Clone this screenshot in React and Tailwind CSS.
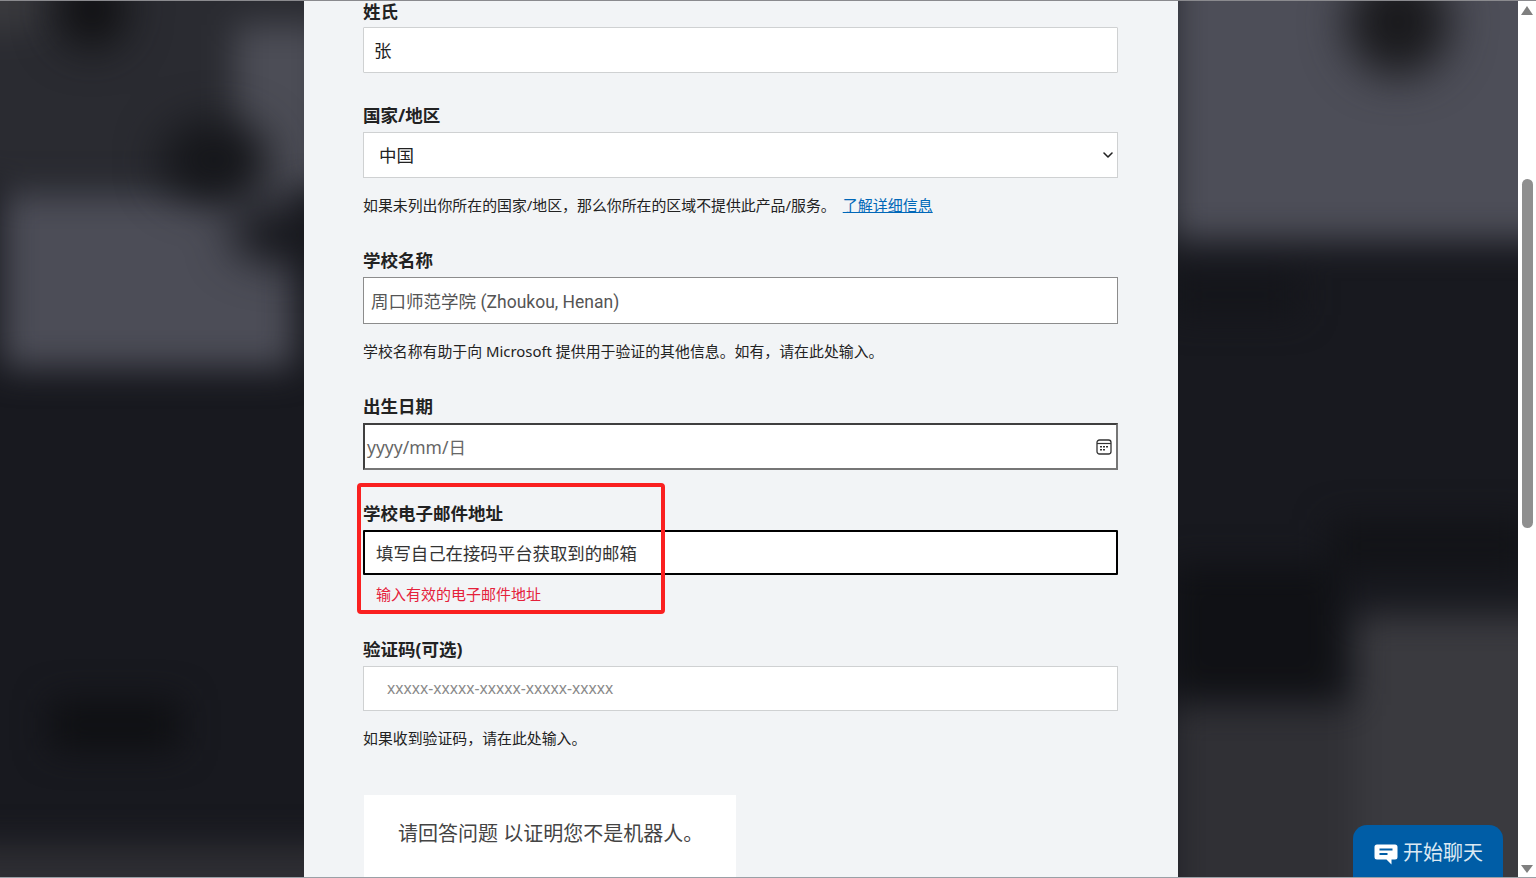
import { ChevronDown } from "lucide-react";

const Label = ({ className = "", children }) => (
    <div className={`h-6 text-[17.5px] font-bold text-[#222] ${className}`}>{children}</div>
);

const Help = ({ className = "", children }) => (
    <p className={`h-6 text-[14.9px] leading-[23px] text-[#222] whitespace-nowrap ${className}`}>{children}</p>
);

// blurred photo behind the form
function Backdrop() {
    return (
        <svg className="absolute inset-0 h-full w-full" viewBox="0 0 1518 878" preserveAspectRatio="none">
            <defs>
                <filter id="soft" x="-20%" y="-20%" width="140%" height="140%" colorInterpolationFilters="sRGB">
                    <feGaussianBlur stdDeviation="17" />
                </filter>
                <filter id="softer" x="-60%" y="-60%" width="220%" height="220%" colorInterpolationFilters="sRGB">
                    <feGaussianBlur stdDeviation="22" />
                </filter>
            </defs>
            <rect width="1518" height="878" fill="#18191f" />
            <g filter="url(#soft)">
                <rect x="-40" y="-40" width="380" height="225" fill="#2a2b31" />
                <rect x="-40" y="-40" width="80" height="70" fill="#3a3a3e" />
                <rect x="2" y="192" width="292" height="176" fill="#4c4d57" />
                <rect x="235" y="25" width="90" height="165" fill="#4c4d56" />
                <rect x="-40" y="845" width="380" height="80" fill="#2e2e33" />
                <rect x="50" y="700" width="130" height="50" fill="#0f1013" />
                <rect x="1170" y="-40" width="400" height="280" fill="#4d4e58" />
                <rect x="1170" y="705" width="400" height="220" fill="#303035" />
                <rect x="1355" y="615" width="200" height="300" fill="#3a3a3f" />
                <rect x="1170" y="275" width="130" height="40" fill="#14151a" />
                <rect x="1170" y="565" width="170" height="130" fill="#101115" />
                <rect x="1330" y="520" width="200" height="50" fill="#121317" />
            </g>
            <g filter="url(#softer)">
                <ellipse cx="92" cy="10" rx="34" ry="38" fill="#0f0f11" />
                <ellipse cx="1398" cy="22" rx="52" ry="54" fill="#1a1a1d" />
                <ellipse cx="215" cy="160" rx="55" ry="40" fill="#15161a" />
                <ellipse cx="285" cy="235" rx="55" ry="28" fill="#14151a" />
            </g>
        </svg>
    );
}

function CalendarIcon() {
    return (
        <svg width="16" height="16" viewBox="0 0 16 16" fill="none" className="shrink-0">
            <rect x="1" y="1" width="14" height="14" rx="2.5" stroke="#333" strokeWidth="1.3" />
            <path d="M1 4.5h14" stroke="#333" strokeWidth="1.2" />
            <path d="M4 7h2v1.6H4zM7 7h2v1.6H7zM10 7h2v1.6h-2zM4 10h2v1.6H4zM7 10h2v1.6H7z" fill="#333" />
        </svg>
    );
}

function ChatIcon() {
    return (
        <svg width="24" height="21" viewBox="0 0 24 21" className="shrink-0">
            <path d="M3 0.5h18a2.5 2.5 0 0 1 2.5 2.5v10a2.5 2.5 0 0 1-2.5 2.5h-3.5v5l-5-5H3A2.5 2.5 0 0 1 .5 13V3A2.5 2.5 0 0 1 3 .5z" fill="#fff" />
            <path d="M5.5 5.5h13M5.5 10h8" stroke="#005da6" strokeWidth="2" />
        </svg>
    );
}

function Scrollbar() {
    return (
        <div className="flex h-full w-[18px] shrink-0 flex-col items-center bg-white">
            <svg width="12" height="9" viewBox="0 0 12 9" className="mt-[6px] shrink-0">
                <path d="M6 0l6 9H0z" fill="#7f7f7f" />
            </svg>
            <div className="mt-[164px] h-[349px] w-[11px] shrink-0 rounded-full bg-[#8f8f8f]"></div>
            <svg width="12" height="8" viewBox="0 0 12 8" className="mt-[337px] shrink-0">
                <path d="M0 0h12L6 8z" fill="#7f7f7f" />
            </svg>
        </div>
    );
}

export default function App() {
    return (
        <div
            className="relative flex h-screen overflow-hidden text-[#222]"
            style={{ fontFamily: '"Noto Sans", "Noto Sans CJK SC", sans-serif' }}
        >
            <div className="relative h-full flex-1 overflow-hidden pl-[304px]">
                <Backdrop />

                <main className="relative h-full w-[874px] bg-[#f2f4f6] px-[59px]">
                    <div className="w-[755px]">
                        <Label className="leading-[22px]">姓氏</Label>
                        <div className="mt-[3px] flex h-[46px] items-center rounded-[1px] border border-[#cfd1d2] bg-white pl-[10px] text-[17.5px]">
                            张
                        </div>

                        <Label className="mt-[31px] leading-[22px]">国家/地区</Label>
                        <div className="mt-[4px] flex h-[46px] items-center justify-between border border-[#cfd1d2] bg-white pl-[15px] pr-[1px] text-[17.5px]">
                            中国
                            <ChevronDown size={16} strokeWidth={2.4} className="text-[#222]" />
                        </div>
                        <Help className="mt-[16px]">
                            如果未列出你所在的国家/地区，那么你所在的区域不提供此产品/服务。
                            <a href="#" className="ml-[7px] text-[15px] text-[#0067b8] underline">了解详细信息</a>
                        </Help>

                        <Label className="mt-[31px] leading-[22px]">学校名称</Label>
                        <div className="mt-[4px] flex h-[47px] items-center border border-[#8c8c8c] bg-white pl-[7px] pt-[2px] text-[17.5px] text-[#555]">
                            <span className="whitespace-pre">周口师范学院 <span className="font-['Roboto']">(Zhoukou, Henan)</span></span>
                        </div>
                        <Help className="mt-[16px]">学校名称有助于向 Microsoft 提供用于验证的其他信息。如有，请在此处输入。</Help>

                        <Label className="mt-[31px] leading-[22px]">出生日期</Label>
                        <div className="mt-[4px] flex h-[47px] items-center justify-between border-2 border-[#767676] border-t-[#3f3f3f] border-l-[#3f3f3f] bg-white pl-[2px] pr-[4px] text-[17.5px] text-[#666]">
                            <span className="pt-[2px]">yyyy/mm/日</span>
                            <CalendarIcon />
                        </div>

                        <Label className="mt-[31px] leading-[24px]">学校电子邮件地址</Label>
                        <div className="mt-[5px] flex h-[45px] items-center rounded-[1px] border-2 border-black bg-white pl-[11px] pt-[2px] text-[17.4px] text-[#333]">
                            填写自己在接码平台获取到的邮箱
                        </div>
                        <p className="mt-[7px] h-6 pl-[13px] text-[15px] leading-[25px] text-[#e5213b]">输入有效的电子邮件地址</p>

                        <Label className="mt-[32px] leading-[22px]">验证码(可选)</Label>
                        <div className="mt-[4px] flex h-[45px] items-center border border-[#cfd1d2] bg-white pl-[23px] pt-px text-[15.6px] text-[#8a8a8a]">
                            xxxxx-xxxxx-xxxxx-xxxxx-xxxxx
                        </div>
                        <Help className="mt-[16px]">如果收到验证码，请在此处输入。</Help>

                        <div className="ml-px mt-[44px] h-[120px] w-[372px] bg-white pl-[34px] pt-[24px] text-[20px] leading-[30px] text-[#444]">
                            请回答问题 以证明您不是机器人。
                        </div>
                    </div>

                    {/* red annotation round the email field */}
                    <div className="absolute left-[53px] top-[483px] h-[131px] w-[308px] rounded-[4px] border-4 border-[#fa2020]"></div>
                </main>

                <button className="absolute bottom-[-20px] left-[1353px] flex h-[73px] w-[150px] items-start gap-[5px] rounded-t-[14px] bg-[#005da6] pl-[21px] pt-[14px] text-[20px] leading-[28px] text-[#dce9f3]">
                    <span className="mt-[5px]"><ChatIcon /></span>
                    开始聊天
                </button>
            </div>

            <Scrollbar />

            {/* window edge lines */}
            <div className="absolute inset-x-0 top-0 h-px bg-[#8a8a8e]"></div>
            <div className="absolute inset-x-0 bottom-0 h-px bg-[#9aa0a6]"></div>
        </div>
    );
}
